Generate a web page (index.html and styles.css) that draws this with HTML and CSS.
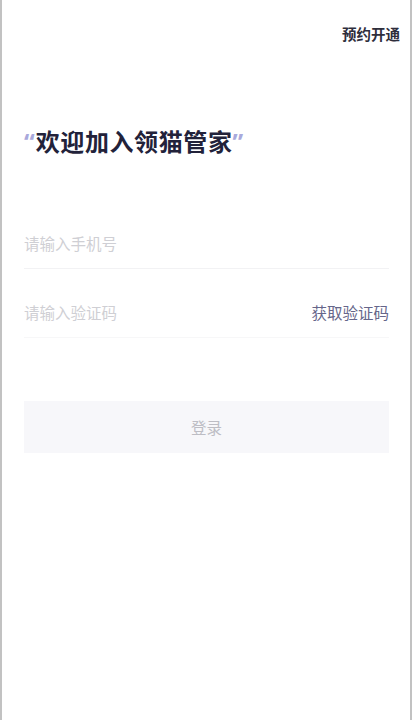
FILE: index.html
```html
<!DOCTYPE html>
<html lang="zh-CN">
<head>
<meta charset="utf-8">
<title>欢迎加入领猫管家</title>
<link rel="stylesheet" href="styles.css">
</head>
<body>
<div class="frame">
  <header class="top">
    <span class="reserve">预约开通</span>
  </header>
  <main class="content">
    <h1 class="title"><span class="quote">“</span>欢迎加入领猫管家<span class="quote">”</span></h1>
    <form class="form">
      <div class="row">
        <input class="field" type="tel" placeholder="请输入手机号">
      </div>
      <div class="row row-code">
        <input class="field" type="text" placeholder="请输入验证码">
        <span class="get-code">获取验证码</span>
      </div>
      <button class="login" type="button">登录</button>
    </form>
  </main>
</div>
</body>
</html>
```

FILE: styles.css
```css
* { box-sizing: border-box; }
html, body {
  margin: 0;
  padding: 0;
  background: #ffffff;
}
body {
  font-family: "Noto Sans CJK SC", "Noto Sans", sans-serif;
}
.frame {
  width: 412px;
  height: 720px;
  border-left: 2px solid #c2c2c2;
  border-right: 2px solid #c2c2c2;
  background: #ffffff;
}
.top {
  height: 68px;
  display: flex;
  justify-content: flex-end;
  align-items: center;
  padding-right: 10px;
}
.reserve {
  font-size: 14.5px;
  font-weight: 700;
  color: #2e2e3c;
  line-height: 20px;
}
.content {
  padding: 0 21px 0 22px;
}
.title {
  margin: 56px 0 0 0;
  font-size: 24px;
  line-height: 34px;
  font-weight: 700;
  color: #22223a;
  letter-spacing: 0.6px;
}
.quote {
  font-family: "Noto Sans", sans-serif;
  color: #a9a9dc;
  font-weight: 700;
  letter-spacing: 1px;
}
.form {
  margin-top: 58px;
  display: flex;
  flex-direction: column;
}
.row {
  height: 52px;
  display: flex;
  align-items: center;
  border-bottom: 1px solid #f2f2f4;
}
.row-code {
  margin-top: 17px;
  border-bottom-color: #f7f7f8;
}
.field {
  flex: 1;
  border: none;
  outline: none;
  padding: 0;
  margin: 0;
  font-family: inherit;
  font-size: 15.5px;
  line-height: 22px;
  color: #333;
  background: transparent;
}
.field::placeholder {
  color: #cfcfd4;
}
.get-code {
  font-size: 15.5px;
  color: #66668a;
  line-height: 22px;
}
.login {
  margin-top: 63px;
  height: 52px;
  border: none;
  background: #f7f7fa;
  color: #bdbdc4;
  font-family: inherit;
  font-size: 15.5px;
  padding: 0;
}
```
